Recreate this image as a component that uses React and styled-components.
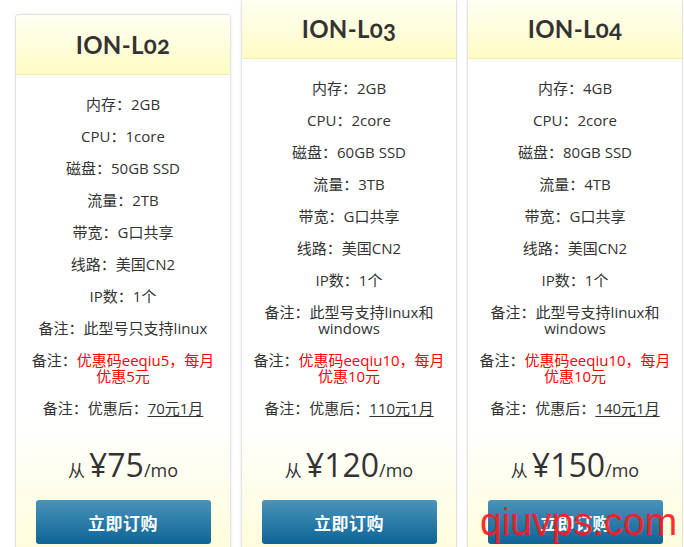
import React from "react";
import styled, { createGlobalStyle } from "styled-components";

const GlobalStyle = createGlobalStyle`
  html, body {
    margin: 0;
    padding: 0;
    background: #fff;
    overflow: hidden;
  }
  body {
    font-family: "Open Sans", "Noto Sans CJK SC", sans-serif;
    color: #333;
  }
`;

const Page = styled.div`
  position: relative;
  width: 684px;
  height: 547px;
  overflow: hidden;
`;

const Row = styled.div`
  display: flex;
  align-items: flex-start;
  gap: 10px;
  padding-left: 15px;
  margin-top: -2px;
`;

const Card = styled.div`
  width: 214px;
  flex-shrink: 0;
  margin-top: ${(p) => (p.lowered ? "16px" : "0")};
  border: 1px solid #e2e2e2;
  border-radius: 4px;
  box-shadow: 0 0 3px rgba(0, 0, 0, 0.08);
  background: #fff;
  overflow: hidden;
`;

const Header = styled.div`
  height: 59px;
  display: flex;
  align-items: center;
  justify-content: center;
  background: linear-gradient(180deg, #fffff4 0%, #fffbc4 100%);
  border-bottom: 1px solid #f4eeb4;
  h3 {
    margin: 0;
    font-family: "Lato", "Liberation Sans", sans-serif;
    font-weight: 700;
    font-size: 24px;
    letter-spacing: 0.3px;
    color: #333;
    font-feature-settings: "onum" 1;
    font-variant-numeric: oldstyle-nums;
  }
`;

const Specs = styled.ul`
  list-style: none;
  margin: 0;
  padding: 13px 8px 0;
`;

const Spec = styled.li`
  padding: 8px 0;
  line-height: 16px;
  font-size: 15px;
  text-align: center;
  color: #333;
  .red {
    color: #ff0000;
  }
  u {
    text-decoration: underline;
    text-underline-offset: 2px;
  }
`;

const Footer = styled.div`
  padding: 21px 20px 40px;
  background: linear-gradient(180deg, #ffffff 0%, #fffcd0 100%);
  display: flex;
  flex-direction: column;
  align-items: center;
`;

const Price = styled.div`
  height: 40px;
  display: flex;
  align-items: baseline;
  justify-content: center;
  color: #333;
  line-height: 40px;
  .from {
    font-size: 17px;
    font-family: "Noto Sans CJK SC", sans-serif;
    margin-right: 4px;
  }
  .amount {
    font-size: 32px;
  }
  .unit {
    font-size: 18px;
  }
`;

const BuyButton = styled.button`
  margin-top: 15px;
  width: 175px;
  height: 44px;
  border: none;
  border-radius: 3px;
  background: linear-gradient(180deg, #4b93bb 0%, #0e6495 100%);
  color: #fff;
  font-family: "Noto Sans CJK SC", sans-serif;
  font-weight: 700;
  font-size: 17px;
  letter-spacing: 0.5px;
  cursor: pointer;
`;

const Watermark = styled.div`
  position: absolute;
  left: 480px;
  top: 500px;
  font-family: "Liberation Sans", Arial, sans-serif;
  font-size: 39px;
  line-height: 44px;
  color: rgba(255, 25, 25, 0.92);
  pointer-events: none;
`;

const plans = [
  {
    name: "ION-L02",
    mem: "2GB",
    cpu: "1core",
    disk: "50GB SSD",
    traffic: "2TB",
    note: ["此型号只支持linux"],
    promo: ["优惠码eeqiu5，每月", "优惠5元"],
    after: "70元1月",
    price: "75",
    lowered: true,
  },
  {
    name: "ION-L03",
    mem: "2GB",
    cpu: "2core",
    disk: "60GB SSD",
    traffic: "3TB",
    note: ["此型号支持linux和", "windows"],
    promo: ["优惠码eeqiu10，每月", "优惠10元"],
    after: "110元1月",
    price: "120",
  },
  {
    name: "ION-L04",
    mem: "4GB",
    cpu: "2core",
    disk: "80GB SSD",
    traffic: "4TB",
    note: ["此型号支持linux和", "windows"],
    promo: ["优惠码eeqiu10，每月", "优惠10元"],
    after: "140元1月",
    price: "150",
  },
];

const Lines = ({ lines }) =>
  lines.map((l, i) => (
    <React.Fragment key={i}>
      {i > 0 && <br />}
      {l}
    </React.Fragment>
  ));

const PlanCard = ({ plan }) => (
  <Card lowered={plan.lowered}>
    <Header>
      <h3>{plan.name}</h3>
    </Header>
    <Specs>
      <Spec>内存：{plan.mem}</Spec>
      <Spec>CPU：{plan.cpu}</Spec>
      <Spec>磁盘：{plan.disk}</Spec>
      <Spec>流量：{plan.traffic}</Spec>
      <Spec>带宽：G口共享</Spec>
      <Spec>线路：美国CN2</Spec>
      <Spec>IP数：1个</Spec>
      <Spec>
        备注：<Lines lines={plan.note} />
      </Spec>
      <Spec>
        备注：
        <span className="red">
          <Lines lines={plan.promo} />
        </span>
      </Spec>
      <Spec>
        备注：优惠后：<u>{plan.after}</u>
      </Spec>
    </Specs>
    <Footer>
      <Price>
        <span className="from">从</span>
        <span className="amount">¥{plan.price}</span>
        <span className="unit">/mo</span>
      </Price>
      <BuyButton>立即订购</BuyButton>
    </Footer>
  </Card>
);

export default function App() {
  return (
    <Page>
      <GlobalStyle />
      <Row>
        {plans.map((p) => (
          <PlanCard key={p.name} plan={p} />
        ))}
      </Row>
      <Watermark>qiuvps.com</Watermark>
    </Page>
  );
}
